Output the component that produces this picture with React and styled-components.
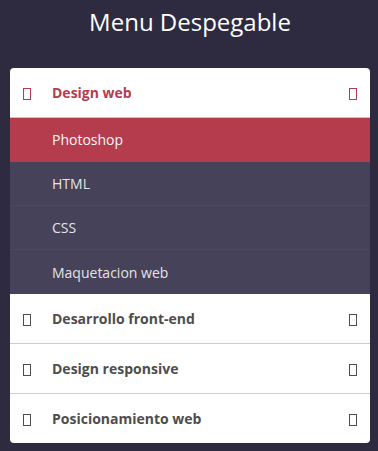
import React, { useState } from "react";
import styled, { createGlobalStyle, css } from "styled-components";

const GlobalStyle = createGlobalStyle`
  html, body {
    margin: 0;
    padding: 0;
    background: #2e2b40;
    font-family: "Open Sans", "DejaVu Sans", sans-serif;
  }
`;

const Page = styled.div`
  padding: 0 8px 0 10px;
`;

const Title = styled.h1`
  margin: 0 0 24px;
  line-height: 44px;
  font-size: 24px;
  font-weight: 400;
  color: #ffffff;
  text-align: center;
`;

const Accordion = styled.ul`
  list-style: none;
  margin: 0;
  padding: 0;
  background: #ffffff;
  border-radius: 4px;
  overflow: hidden;
`;

const Item = styled.li`
  border-bottom: 1px solid #cccccc;

  &:last-child {
    border-bottom: none;
  }

  ${p =>
    p.$expanded &&
    css`
      border-bottom: none;
    `}
`;

const Head = styled.div`
  display: flex;
  align-items: center;
  height: 49px;
  padding: 0 13px;
  font-size: 14px;
  font-weight: 700;
  color: ${p => (p.$open ? "#b63b4f" : "#4d4d4d")};
  cursor: pointer;
`;

const Label = styled.span`
  flex: 1;
  margin-left: 21px;
`;

const Glyph = styled.span`
  display: inline-block;
  box-sizing: border-box;
  width: 8px;
  height: 12px;
  margin-top: 2px;
  border: 1px solid currentColor;
`;

const Sub = styled.ul`
  list-style: none;
  margin: 0;
  padding: 0;
  background: #454259;
  border-top: 1px solid #c4c4c4;
`;

const SubLink = styled.li`
  height: 43px;
  display: flex;
  align-items: center;
  padding-left: 42px;
  font-size: 14px;
  color: #e4e4e4;
  border-bottom: 1px solid #4c495f;

  &:last-child {
    border-bottom: none;
    height: 44px;
  }

  ${p =>
    p.$active &&
    css`
      background: #b53c4d;
      color: #f8f8f8;
      border-bottom-color: #b53c4d;
    `}
`;

const menus = [
  {
    title: "Design web",
    items: ["Photoshop", "HTML", "CSS", "Maquetacion web"]
  },
  { title: "Desarrollo front-end", items: [] },
  { title: "Design responsive", items: [] },
  { title: "Posicionamiento web", items: [] }
];

function App() {
  const [open, setOpen] = useState(0);

  return (
    <Page>
      <GlobalStyle />
      <Title>Menu Despegable</Title>
      <Accordion>
        {menus.map((m, i) => {
          const expanded = open === i && m.items.length > 0;
          return (
            <Item key={m.title} $expanded={expanded}>
              <Head $open={open === i} onClick={() => setOpen(open === i ? -1 : i)}>
                <Glyph />
                <Label>{m.title}</Label>
                <Glyph />
              </Head>
              {expanded && (
                <Sub>
                  {m.items.map((s, j) => (
                    <SubLink key={s} $active={j === 0}>
                      {s}
                    </SubLink>
                  ))}
                </Sub>
              )}
            </Item>
          );
        })}
      </Accordion>
    </Page>
  );
}

export default App;
